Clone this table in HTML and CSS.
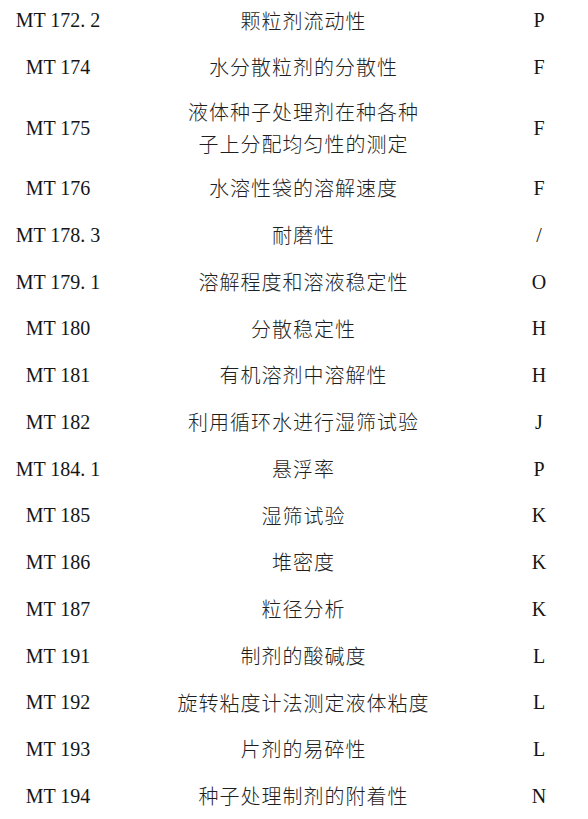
FILE: index.html
```html
<!DOCTYPE html>
<html lang="zh">
<head>
<meta charset="utf-8">
<title>Methods</title>
<link rel="stylesheet" href="styles.css">
</head>
<body>
<div class="table">
  <div class="row"><div class="code">MT 172. 2</div><div class="desc">颗粒剂流动性</div><div class="cls">P</div></div>
  <div class="row"><div class="code">MT 174</div><div class="desc">水分散粒剂的分散性</div><div class="cls">F</div></div>
  <div class="row double"><div class="code">MT 175</div><div class="desc">液体种子处理剂在种各种<br>子上分配均匀性的测定</div><div class="cls">F</div></div>
  <div class="row"><div class="code">MT 176</div><div class="desc">水溶性袋的溶解速度</div><div class="cls">F</div></div>
  <div class="row"><div class="code">MT 178. 3</div><div class="desc">耐磨性</div><div class="cls">/</div></div>
  <div class="row"><div class="code">MT 179. 1</div><div class="desc">溶解程度和溶液稳定性</div><div class="cls">O</div></div>
  <div class="row"><div class="code">MT 180</div><div class="desc">分散稳定性</div><div class="cls">H</div></div>
  <div class="row"><div class="code">MT 181</div><div class="desc">有机溶剂中溶解性</div><div class="cls">H</div></div>
  <div class="row"><div class="code">MT 182</div><div class="desc">利用循环水进行湿筛试验</div><div class="cls">J</div></div>
  <div class="row"><div class="code">MT 184. 1</div><div class="desc">悬浮率</div><div class="cls">P</div></div>
  <div class="row"><div class="code">MT 185</div><div class="desc">湿筛试验</div><div class="cls">K</div></div>
  <div class="row"><div class="code">MT 186</div><div class="desc">堆密度</div><div class="cls">K</div></div>
  <div class="row"><div class="code">MT 187</div><div class="desc">粒径分析</div><div class="cls">K</div></div>
  <div class="row"><div class="code">MT 191</div><div class="desc">制剂的酸碱度</div><div class="cls">L</div></div>
  <div class="row"><div class="code">MT 192</div><div class="desc">旋转粘度计法测定液体粘度</div><div class="cls">L</div></div>
  <div class="row"><div class="code">MT 193</div><div class="desc">片剂的易碎性</div><div class="cls">L</div></div>
  <div class="row"><div class="code">MT 194</div><div class="desc">种子处理制剂的附着性</div><div class="cls">N</div></div>
</div>
</body>
</html>
```
FILE: styles.css
```css
html, body {
  margin: 0;
  padding: 0;
  background: #ffffff;
}
body {
  width: 588px;
  height: 819px;
  overflow: hidden;
  font-family: "Liberation Serif", "Noto Sans CJK SC", serif;
  font-size: 20px;
  color: #151515;
}
.table {
  margin-top: -3px;
  display: flex;
  flex-direction: column;
}
.row {
  display: grid;
  grid-template-columns: 116px 374px 98px;
  align-items: center;
  min-height: 46.75px;
  padding: 5.6px 0;
  box-sizing: border-box;
}
.code, .cls {
  text-align: center;
  line-height: 24px;
}
.desc {
  text-align: center;
  line-height: 31.5px;
  letter-spacing: 1px;
  padding-left: 1px;
  font-family: "Noto Sans CJK SC", "Liberation Serif", sans-serif;
  font-weight: 300;
  color: #1e1e1e;
}
```
